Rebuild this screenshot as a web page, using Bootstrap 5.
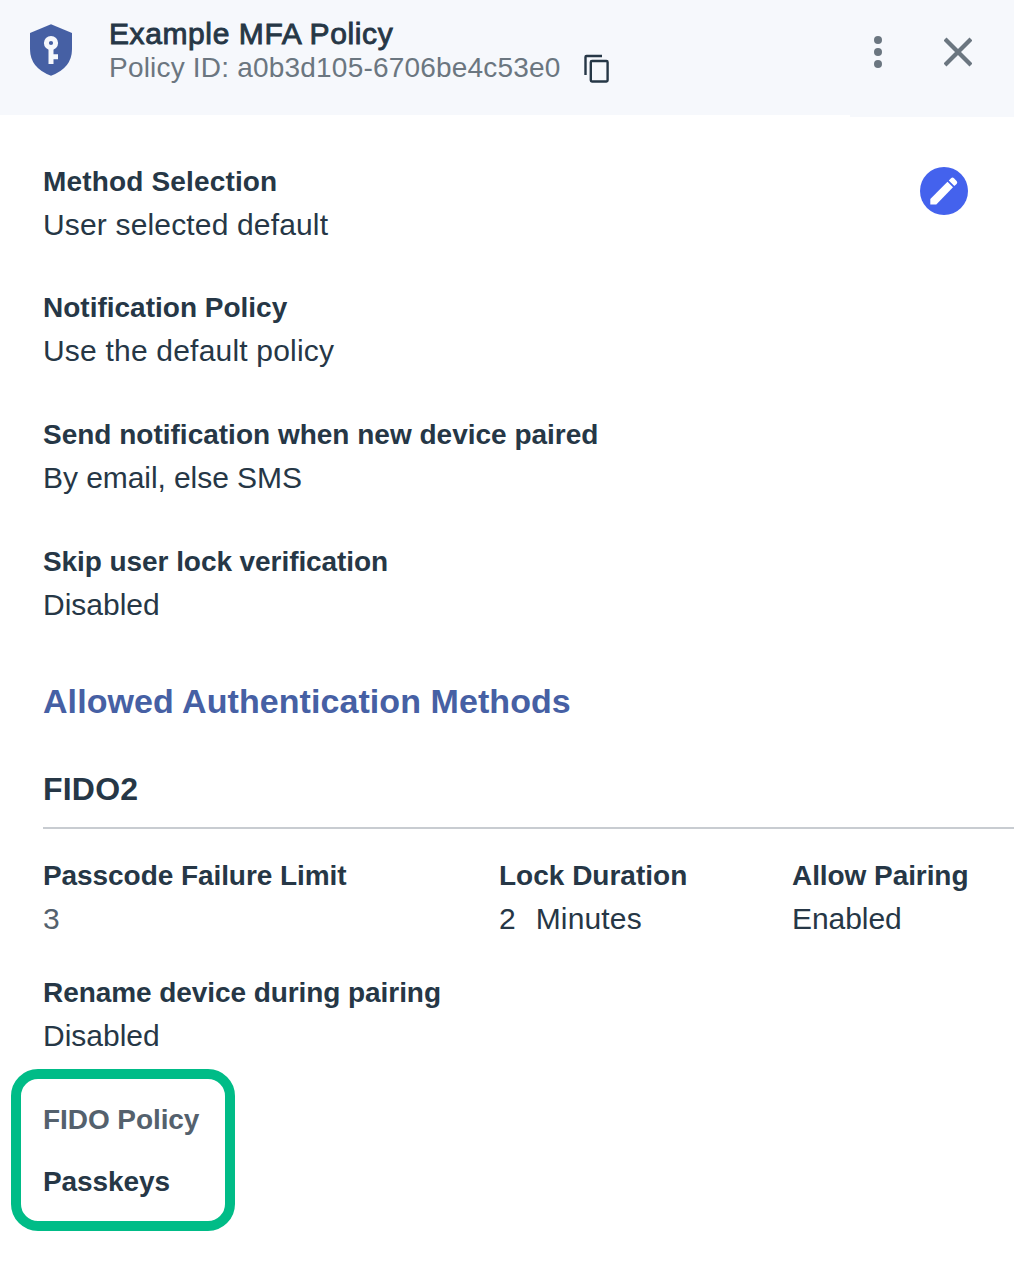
<!DOCTYPE html>
<html lang="en">
<head>
<meta charset="utf-8">
<meta name="viewport" content="width=device-width, initial-scale=1">
<title>Example MFA Policy</title>
<link rel="stylesheet" href="https://cdn.jsdelivr.net/npm/bootstrap@5.3.0/dist/css/bootstrap.min.css">
<style>
body{font-family:"Liberation Sans",Arial,sans-serif;color:#263746;background:#fff;height:1288px;overflow:hidden}
svg{display:block;flex:none}
.panel-head{height:115px;background:#f6f8fc}
.head-main{padding:18px 0 0 29px}
.shield-icon{margin:6px 36px 0 0}
.policy-title{font-size:30px;line-height:32px;font-weight:400;-webkit-text-stroke:.9px #263746;letter-spacing:.6px;margin:0}
.policy-id{font-size:28px;line-height:34px;height:34px;color:#6b7680;letter-spacing:.2px;margin-top:1px}
.id-copy{margin:3px 0 0 22px}
.head-actions{width:164px;height:117px;background:#f6f8fc;padding:36px 42px 0 24px}
.panel-main{padding:47px 0 0 43px}
.field-label{font-size:28px;line-height:40px;font-weight:700}
.track-tight{letter-spacing:-.07px}
.track-loose{letter-spacing:.16px}
.track-wide{letter-spacing:.2px}
.field-value{font-size:30px;line-height:46px}
.unit-gap{gap:20px}
.soft-value{color:#54616d}
.field-block{height:86px;margin-bottom:41px;white-space:nowrap}
.first-row{margin-bottom:-1px}
.edit-btn{width:48px;height:48px;background:#4462ed;margin:5px 46px 0 0}
.methods-title{font-size:34px;line-height:44px;font-weight:700;color:#4660a4;margin:51px 0 0;letter-spacing:.07px}
.fido-title{font-size:32px;line-height:40px;font-weight:700;margin:46px 0 0;padding-bottom:18px;border-bottom:2px solid #c8ccd1;letter-spacing:.2px}
.fido-fields{margin-top:27px;height:86px;white-space:nowrap}
.fido-fields + .fido-fields{margin-top:31px}
.col-limit{width:456px}.col-lock{width:293px}
.highlight-box{width:224px;height:162px;border:10px solid #00bc87;border-radius:27px;margin:10px 0 0 -32px;padding:21px 0 0 22px;white-space:nowrap}
.passkey-row{margin-top:22px}
</style>
</head>
<body>
<header class="panel-head d-flex justify-content-between align-items-start">
  <div class="head-main d-flex">
    <svg class="shield-icon" width="44" height="52" viewBox="0 0 44 52"><path fill="#4660a4" d="M22 .300 43 9V25Q43 44 22 51.700Q1 44 1 25V9Z"/><circle cx="22" cy="19" r="4.600" fill="none" stroke="#f6f8fc" stroke-width="5"/><path fill="#f6f8fc" d="M19.500 24h5v6.300H29v5H24.500V40h-5Z"/></svg>
    <div>
      <h1 class="policy-title">Example MFA Policy</h1>
      <div class="policy-id d-flex"><span>Policy ID: a0b3d105-6706be4c53e0</span>
        <svg class="id-copy" width="28" height="30" viewBox="0 0 28 30" fill="none" stroke="#263746" stroke-width="2.400"><path d="M2.500 21V3Q2.500 2 3.500 2H19"/><rect x="7.800" y="7" width="16.800" height="20.500" rx="1.200"/></svg>
      </div>
    </div>
  </div>
  <div class="head-actions d-flex justify-content-between align-items-start">
    <svg width="8" height="32" viewBox="0 0 8 32" fill="#6b7680"><circle cx="4" cy="4" r="4"/><circle cx="4" cy="16" r="4"/><circle cx="4" cy="28" r="4"/></svg>
    <svg width="28" height="32" viewBox="0 0 28 32"><path d="M2.500 4.500 25.500 27.500M25.500 4.500 2.500 27.500" stroke="#6b7680" stroke-width="4.300" stroke-linecap="square"/></svg>
  </div>
</header>
<main class="panel-main">
  <div class="first-row d-flex justify-content-between align-items-start">
    <div class="field-block"><div class="field-label track-loose">Method Selection</div><div class="field-value track-loose">User selected default</div></div>
    <button class="edit-btn btn rounded-circle border-0 p-0" aria-label="Edit"><svg width="48" height="48" viewBox="0 0 48 48" fill="#fff"><path d="M10.300 32 27.500 14.800 33 20.300 16.300 37.500H10.300Z"/><path d="M28.800 13.500 31 11.300Q32.500 9.800 34 11.300L36.600 13.900Q38 15.400 36.600 16.900L34.300 19Z"/></svg></button>
  </div>
  <div class="field-block"><div class="field-label">Notification Policy</div><div class="field-value track-wide">Use the default policy</div></div>
  <div class="field-block"><div class="field-label">Send notification when new device paired</div><div class="field-value track-tight">By email, else SMS</div></div>
  <div class="field-block"><div class="field-label track-tight">Skip user lock verification</div><div class="field-value">Disabled</div></div>
  <h2 class="methods-title">Allowed Authentication Methods</h2>
  <h3 class="fido-title">FIDO2</h3>
  <div class="fido-fields d-flex">
    <div class="col-limit"><div class="field-label track-tight">Passcode Failure Limit</div><div class="field-value soft-value">3</div></div>
    <div class="col-lock"><div class="field-label">Lock Duration</div><div class="field-value d-flex unit-gap"><span>2</span><span class="track-loose">Minutes</span></div></div>
    <div><div class="field-label track-tight">Allow Pairing</div><div class="field-value track-tight">Enabled</div></div>
  </div>
  <div class="fido-fields"><div class="field-label track-tight">Rename device during pairing</div><div class="field-value">Disabled</div></div>
  <div class="highlight-box"><div class="field-label soft-value track-tight">FIDO Policy</div><div class="field-label track-tight passkey-row">Passkeys</div></div>
</main>
<script src="https://cdn.jsdelivr.net/npm/bootstrap@5.3.0/dist/js/bootstrap.bundle.min.js"></script>
</body>
</html>
